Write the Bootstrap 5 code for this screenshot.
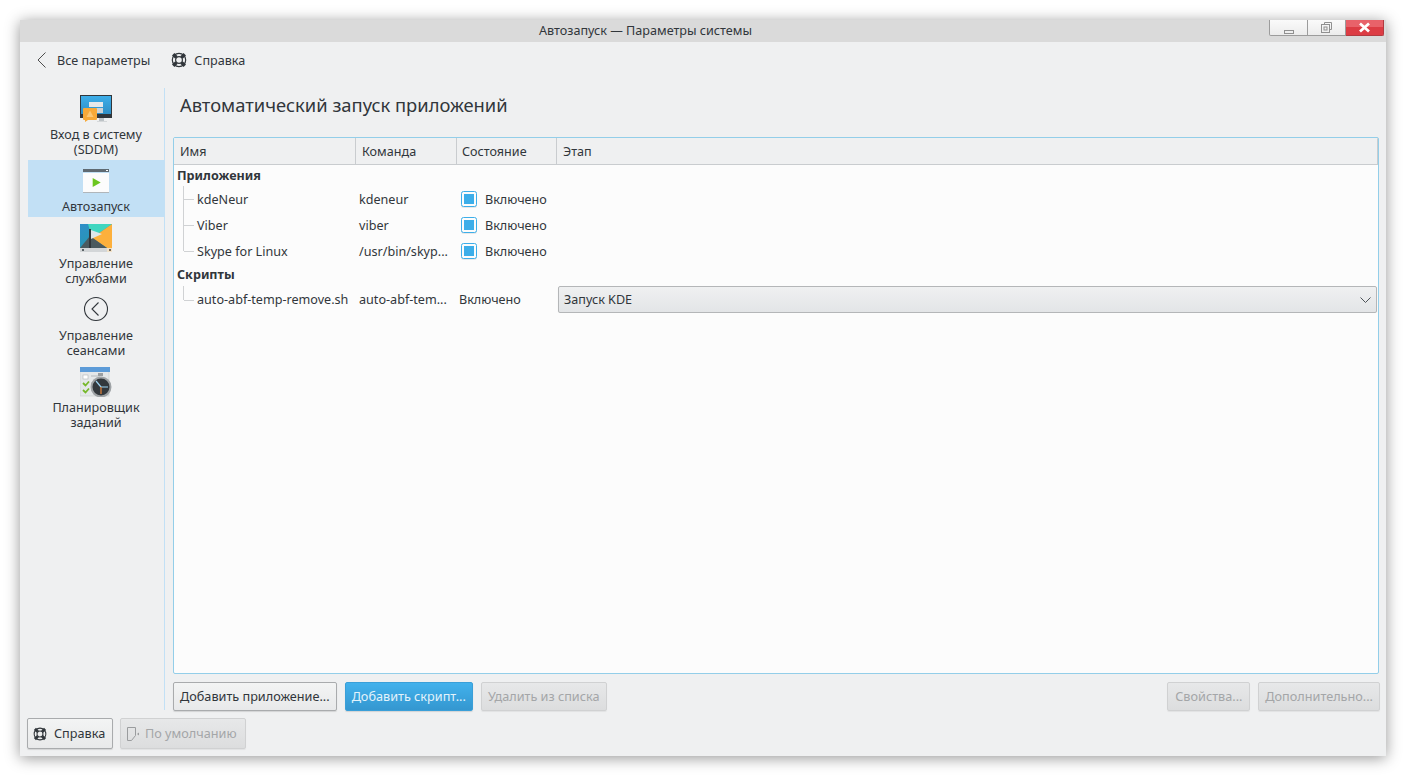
<!DOCTYPE html>
<html lang="ru">
<head>
<meta charset="utf-8">
<title>Автозапуск — Параметры системы</title>
<link href="https://cdn.jsdelivr.net/npm/bootstrap@5.3.0/dist/css/bootstrap.min.css" rel="stylesheet">
<style>
html,body{height:100%;}
body{background:#fff;font-family:"Noto Sans",sans-serif;font-size:12.6px;line-height:15px;color:#31363b;overflow:hidden;}
.win{margin:20px;width:1366px;height:736px;background:#eff0f1;box-shadow:0 2px 14px rgba(0,0,0,.42);}
.win-title{height:22px;background:#dadada;padding:0 115px 0 0;position:relative;line-height:21px;}
.win-btns{position:absolute;top:0;right:2px;height:16px;}
.win-btn{width:38px;height:16px;background:linear-gradient(#fafafa,#ececec);border:1px solid #9c9c9c;border-top:0;}
.win-btn + .win-btn{border-left:0;}
.win-btn.close-x{background:linear-gradient(#e8626a 0 45%,#dc3c44 46%);border-color:#b23a40;border-radius:0 0 2px 0;}
.win-btn:first-child{width:39px;border-radius:0 0 0 2px;}
.tool-bar{height:46px;padding:0 0 10px 16px;}
.tool-item{margin-right:21px;}
.tool-ico{margin-right:7px;}
.side-col{width:137px;margin-left:8px;border-right:1px solid #c2e0f5;}
.side-item{padding:4px 0 3px;text-align:center;}
.side-item.sel{background:#c2e0f5;}
.side-ico{height:32px;margin-bottom:3px;}
.side-ico svg{display:block;}
.main-col{padding-left:8px;width:1215px;}
.page-h{font-size:18.35px;line-height:24px;padding:5px 0 0 7px;height:49px;font-weight:400;margin:0;color:#31363b;}
.tree-box{width:1206px;height:537px;border:1px solid #93cee9;border-radius:2px;background:#fcfcfc;overflow:hidden;}
.tree-tbl{table-layout:fixed;width:1204px;border-collapse:separate;border-spacing:0;}
.tree-tbl th{height:27px;background:#eff0f1;font-weight:400;padding:1px 0 0 6px;border-right:1px solid #c9cccf;border-bottom:1px solid #c9cccf;}
.tree-tbl th:nth-child(3){padding-left:5px;}
.tree-tbl td{padding:0;white-space:nowrap;overflow:hidden;}
.grp td{height:21px;padding-left:3px;font-weight:700;}
.grp.grp-two td{height:22px;padding-bottom:2px;}
.kid td{height:26px;}
.kid.tall td{height:27px;}
.td-name{position:relative;padding-left:23px !important;}
.td-name::before{content:"";position:absolute;left:9px;top:0;bottom:0;width:1px;background:#d0d2d4;}
.kid.last .td-name::before{bottom:50%;}
.td-name::after{content:"";position:absolute;left:10px;top:50%;width:10px;height:1px;background:#d0d2d4;}
.td-cmd{padding-left:3px !important;}
.td-state{padding-left:4px !important;}
.td-state.plain{padding-left:2px !important;}
.chk{width:16px;height:16px;border:1px solid #3daee9;border-radius:2.5px;background:#fcfcfc;padding:2px;margin-right:8px;box-shadow:0 1px 0 rgba(0,0,0,.08);}
.chk i{display:block;width:10px;height:10px;background:#3daee9;}
.combo{height:27px;width:819px;margin-left:1px;border:1px solid #b4b6b8;border-radius:2px;background:linear-gradient(#eff0f1,#e3e5e7);padding:0 5px;box-shadow:0 1px 1px rgba(0,0,0,.08);}
.kbtn{height:29px;padding:0 6px;border:1px solid #a9abad;border-radius:2px;background:linear-gradient(#f3f4f4,#e8e9ea);color:#31363b;font-size:12.68px;line-height:15px;box-shadow:0 1px 1px rgba(0,0,0,.12);white-space:nowrap;}
.kbtn.blue{background:linear-gradient(#42b1ec,#3497d0);border-color:#3a9fd8;color:#e3f3fb;}
.kbtn.off{background:linear-gradient(#e7e8e9,#dcddde);border-color:#d0d1d2;color:#a4a6a8;box-shadow:0 1px 1px rgba(0,0,0,.06);}
.tall-btn{height:31px;}
.pad-help{padding:0 6px 0 5px;width:86px;}
.pad-default{padding:0 6px 0 5px;width:126px;margin-left:7px;}
.ico-gap{margin-right:7px;}
.ico-gap-s{margin-right:5px;}
.btn-props{width:83px;}
.btn-row{height:29px;margin-top:8px;width:1207px;}
.foot-row{padding:8px 0 0 7px;}
.body-row{height:622px;}
</style>
</head>
<body>
<svg width="0" height="0" class="d-block" aria-hidden="true">
<defs>
<symbol id="buoy" viewBox="0 0 16 16">
<circle cx="8" cy="8" r="6.700" fill="none" stroke="#31363b" stroke-width="1.200"/>
<circle cx="8" cy="8" r="3.400" fill="none" stroke="#31363b" stroke-width="1.200"/>
<path d="M2.200 2.200 5.500 5.500M13.800 2.200 10.500 5.500M2.200 13.800 5.500 10.500M13.800 13.800 10.500 10.500" stroke="#31363b" stroke-width="3.400"/>
</symbol>
</defs>
</svg>
<div class="win">
  <div class="win-title text-center">Автозапуск — Параметры системы
    <div class="win-btns d-flex">
      <div class="win-btn d-flex align-items-center justify-content-center"><svg width="10" height="4" viewBox="0 0 10 4" class="mt-2"><rect x=".5" y=".5" width="9" height="3" fill="none" stroke="#909090"/></svg></div>
      <div class="win-btn d-flex align-items-center justify-content-center"><svg width="11" height="11" viewBox="0 0 11 11"><path d="M3.500 2.500V.5h7v7h-2" fill="none" stroke="#909090"/><rect x=".5" y="2.500" width="8" height="8" fill="none" stroke="#909090"/><rect x="3" y="5" width="3" height="3" fill="none" stroke="#909090"/></svg></div>
      <div class="win-btn close-x d-flex align-items-center justify-content-center"><svg width="13" height="11" viewBox="0 0 13 11"><path d="M2 1.500 11 9.500M11 1.500 2 9.500" stroke="#fff" stroke-width="2.800"/></svg></div>
    </div>
  </div>

  <div class="tool-bar d-flex align-items-center">
    <div class="tool-item d-flex align-items-center">
      <svg width="13" height="16" viewBox="0 0 13 16" class="me-2"><path d="M9.500 .5 2 8l7.500 7.500" fill="none" stroke="#4d4d4d" stroke-width="1"/></svg>
      <span>Все параметры</span>
    </div>
    <div class="d-flex align-items-center">
      <svg width="16" height="16" class="tool-ico"><use href="#buoy"/></svg>
      <span>Справка</span>
    </div>
  </div>

  <div class="body-row d-flex">
    <div class="side-col flex-shrink-0">
      <div class="side-item">
        <div class="side-ico d-flex justify-content-center">
          <svg width="32" height="32" viewBox="0 0 32 32">
            <defs><linearGradient id="g1" x1="0" y1="0" x2="0" y2="1"><stop offset="0" stop-color="#3daee9"/><stop offset="1" stop-color="#2f8fc6"/></linearGradient></defs>
            <rect x="0" y="3" width="32" height="23" fill="#31363b"/>
            <rect x="1" y="4" width="30" height="18" fill="url(#g1)"/>
            <rect x="9" y="10" width="14" height="5" fill="#e6e8ea"/>
            <rect x="9" y="16" width="14" height="5" fill="#cfd3d6"/>
            <rect x="19" y="26" width="5" height="3" fill="#bdc3c7"/>
            <rect x="17" y="29" width="10" height="1" fill="#d5d8da"/>
            <rect x="3" y="16" width="14" height="12" rx="1" fill="#f7a938"/>
            <path d="M5 28h3l-3 2z" fill="#f7a938"/>
            <path d="M10 18.500 6.500 25h7z" fill="#fbc774"/>
          </svg>
        </div>
        <div>Вход в систему<br>(SDDM)</div>
      </div>
      <div class="side-item sel">
        <div class="side-ico d-flex justify-content-center">
          <svg width="32" height="32" viewBox="0 0 32 32">
            <rect x="3" y="9" width="26" height="20" fill="#fcfcfc"/>
            <rect x="3" y="5" width="26" height="3" fill="#5f6a72"/>
            <rect x="26" y="6" width="2" height="1" fill="#fff"/>
            <rect x="3" y="28" width="26" height="1" fill="#b0b6ba"/>
            <path d="M12.700 14 20.700 18.500 12.700 23z" fill="#6cc61f"/>
          </svg>
        </div>
        <div>Автозапуск</div>
      </div>
      <div class="side-item">
        <div class="side-ico d-flex justify-content-center">
          <svg width="32" height="32" viewBox="0 0 32 32">
            <defs><linearGradient id="g3" x1="0" y1="0" x2="1" y2="1"><stop offset="0" stop-color="#2f8ec9"/><stop offset="1" stop-color="#1f9fa0"/></linearGradient></defs>
            <rect x="0" y="3" width="32" height="28" fill="url(#g3)"/>
            <path d="M8 3H32L12 17z" fill="#3fd6c0"/>
            <path d="M32 3V27H27L12 17z" fill="#fdb03c"/>
            <path d="M0 27 10 15 27 27z" fill="#4b5a5f"/>
            <rect x="0" y="27" width="32" height="4" fill="#d3d6d8"/>
            <rect x="27" y="27" width="5" height="4" fill="#f2e2c8"/>
            <rect x="9" y="8" width="2" height="19" fill="#31363b"/>
            <path d="M11 9 22 13l-11 5z" fill="#dfe6ea"/>
            <rect x="29" y="28" width="2" height="2" fill="#7a6a55"/>
            <rect x="2" y="28" width="2" height="2" fill="#5a6266"/>
          </svg>
        </div>
        <div>Управление<br>службами</div>
      </div>
      <div class="side-item">
        <div class="side-ico d-flex justify-content-center">
          <svg width="32" height="32" viewBox="0 0 32 32">
            <circle cx="16" cy="16" r="11.500" fill="none" stroke="#31363b" stroke-width="1.100"/>
            <path d="M18.500 9.500 12 16l6.500 6.500" fill="none" stroke="#31363b" stroke-width="1.100"/>
          </svg>
        </div>
        <div>Управление<br>сеансами</div>
      </div>
      <div class="side-item">
        <div class="side-ico d-flex justify-content-center">
          <svg width="32" height="32" viewBox="0 0 32 32">
            <rect x="0" y="3" width="29" height="28" fill="#e4e7e9" stroke="#c0c4c7" stroke-width=".5"/>
            <rect x="0" y="2" width="30" height="5" fill="#5c9bd8"/>
            <rect x="3" y="10" width="5" height="4" fill="#fff" stroke="#b0b4b7" stroke-width=".6"/>
            <path d="M3 18l2.500 2.500L9 16.500M3 25l2.500 2.500L9 23.500" fill="none" stroke="#76b82a" stroke-width="1.800"/>
            <path d="M11 11h9M11 18h2M11 25h2" stroke="#b5b9bc"/>
            <rect x="18" y="8" width="5" height="3" fill="#9a9ea1"/>
            <circle cx="21" cy="22" r="10.500" fill="#9fa3a6"/>
            <circle cx="21" cy="22" r="8.500" fill="#33383d"/>
            <path d="M21 22 16 16" stroke="#9fd4f2" stroke-width="1.200"/>
            <path d="M21 22h7" stroke="#9fd4f2"/>
            <path d="M21 22v7" stroke="#e8843a" stroke-width="1.200"/>
          </svg>
        </div>
        <div>Планировщик<br>заданий</div>
      </div>
    </div>

    <div class="main-col flex-shrink-0">
      <h1 class="page-h">Автоматический запуск приложений</h1>
      <div class="tree-box">
        <table class="tree-tbl">
          <colgroup><col style="width:182px"><col style="width:101px"><col style="width:100px"><col></colgroup>
          <thead><tr><th>Имя</th><th>Команда</th><th>Состояние</th><th>Этап</th></tr></thead>
          <tbody>
            <tr class="grp"><td colspan="4">Приложения</td></tr>
            <tr class="kid"><td class="td-name">kdeNeur</td><td class="td-cmd">kdeneur</td><td class="td-state"><div class="d-flex align-items-center"><span class="chk"><i></i></span>Включено</div></td><td></td></tr>
            <tr class="kid"><td class="td-name">Viber</td><td class="td-cmd">viber</td><td class="td-state"><div class="d-flex align-items-center"><span class="chk"><i></i></span>Включено</div></td><td></td></tr>
            <tr class="kid last"><td class="td-name">Skype for Linux</td><td class="td-cmd">/usr/bin/skyp...</td><td class="td-state"><div class="d-flex align-items-center"><span class="chk"><i></i></span>Включено</div></td><td></td></tr>
            <tr class="grp grp-two"><td colspan="4">Скрипты</td></tr>
            <tr class="kid tall last"><td class="td-name">auto-abf-temp-remove.sh</td><td class="td-cmd">auto-abf-tem...</td><td class="td-state plain">Включено</td>
              <td><div class="combo d-flex align-items-center justify-content-between"><span>Запуск KDE</span><svg width="11" height="6" viewBox="0 0 11 6"><path d="M.5 .5 5.500 5.500 10.500 .5" fill="none" stroke="#4d5257" stroke-width="1"/></svg></div></td></tr>
          </tbody>
        </table>
      </div>
      <div class="btn-row d-flex">
        <button type="button" class="kbtn">Добавить приложение...</button>
        <button type="button" class="kbtn blue ms-2">Добавить скрипт...</button>
        <button type="button" class="kbtn off ms-2">Удалить из списка</button>
        <button type="button" class="kbtn off btn-props ms-auto">Свойства...</button>
        <button type="button" class="kbtn off ms-2">Дополнительно...</button>
      </div>
    </div>
  </div>

  <div class="foot-row d-flex">
    <button type="button" class="kbtn tall-btn pad-help d-flex align-items-center"><svg width="14" height="14" class="ico-gap flex-shrink-0"><use href="#buoy"/></svg>Справка</button>
    <button type="button" class="kbtn off tall-btn pad-default d-flex align-items-center">
      <svg width="14" height="16" viewBox="0 0 14 16" class="ico-gap-s flex-shrink-0"><path d="M1.500 1.500h8v8l-4 5h-4z" fill="none" stroke="#9a9c9e"/><path d="M11 8l2-1.500v3z" fill="#9a9c9e"/></svg>По умолчанию</button>
  </div>
</div>
<script src="https://cdn.jsdelivr.net/npm/bootstrap@5.3.0/dist/js/bootstrap.bundle.min.js"></script>
</body>
</html>
